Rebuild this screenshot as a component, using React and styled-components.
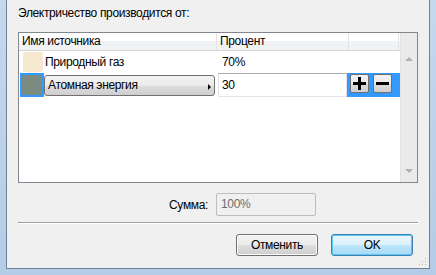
import React from "react";
import styled, { createGlobalStyle } from "styled-components";

const GlobalStyle = createGlobalStyle`
  body {
    margin: 0;
    font-family: "Liberation Sans", Arial, sans-serif;
    font-size: 12px;
    letter-spacing: -0.35px;
    color: #000;
  }
`;

const sources = [
  { name: "Природный газ", color: "#f6e7cf", percent: "70%" },
  { name: "Атомная энергия", color: "#7b8b7f", percent: "30", editing: true },
];

const App = () => {
  return (
    <Frame>
      <GlobalStyle />
      <Window>
        <Caption>Электричество производится от:</Caption>
        <TableBox>
          <TableMain>
            <HeaderRow>
              <HeaderCell $width={198}>Имя источника</HeaderCell>
              <HeaderCell $width={132}>Процент</HeaderCell>
              <HeaderCell $width={50} />
            </HeaderRow>
            {sources.map((s) =>
              s.editing ? (
                <EditRow key={s.name}>
                  <SelectedSwatchCell>
                    <Swatch $color={s.color} />
                  </SelectedSwatchCell>
                  <Dropdown>
                    {s.name}
                    <Arrow />
                  </Dropdown>
                  <PercentInput>{s.percent}</PercentInput>
                  <ActionsCell>
                    <SmallButton>
                      <svg width="13" height="13" viewBox="0 0 13 13">
                        <rect x="5" y="0" width="3" height="13" fill="#000" />
                        <rect x="0" y="5" width="13" height="3" fill="#000" />
                      </svg>
                    </SmallButton>
                    <SmallButton>
                      <svg width="13" height="13" viewBox="0 0 13 13">
                        <rect x="0" y="5" width="13" height="3" fill="#000" />
                      </svg>
                    </SmallButton>
                  </ActionsCell>
                </EditRow>
              ) : (
                <Row key={s.name}>
                  <SwatchCell>
                    <Swatch $color={s.color} />
                  </SwatchCell>
                  <NameCell>{s.name}</NameCell>
                  <PercentCell>{s.percent}</PercentCell>
                </Row>
              )
            )}
          </TableMain>
          <Scrollbar>
            <ScrollArrow $up />
            <ScrollArrow />
          </Scrollbar>
        </TableBox>
        <SumRow>
          <SumLabel>Сумма:</SumLabel>
          <SumInput>100%</SumInput>
        </SumRow>
        <Separator />
        <ButtonRow>
          <Button>Отменить</Button>
          <Button $default>OK</Button>
        </ButtonRow>
        <Grip>
          <svg width="8" height="8" viewBox="0 0 8 8">
            <rect x="6" y="0" width="1" height="1" fill="#b5b9bd" />
            <rect x="3" y="3" width="1" height="1" fill="#b5b9bd" />
            <rect x="6" y="3" width="1" height="1" fill="#b5b9bd" />
            <rect x="0" y="6" width="1" height="1" fill="#b5b9bd" />
            <rect x="3" y="6" width="1" height="1" fill="#b5b9bd" />
            <rect x="6" y="6" width="1" height="1" fill="#b5b9bd" />
          </svg>
        </Grip>
      </Window>
    </Frame>
  );
};

export default App;

const Frame = styled.div`
  width: 436px;
  height: 275px;
  box-sizing: border-box;
  padding: 0 6px 6px 6px;
  background: linear-gradient(to bottom, #c4d8ee, #b5cce6);
`;

const Window = styled.div`
  position: relative;
  height: 100%;
  box-sizing: border-box;
  background: #f0f0f0;
  border: 1px solid #6e8197;
  border-top: none;
  padding: 0 11px;
  display: flex;
  flex-direction: column;
`;

const Caption = styled.div`
  margin-top: 6px;
  height: 15px;
  line-height: 15px;
`;

const TableBox = styled.div`
  margin-top: 11px;
  height: 151px;
  box-sizing: border-box;
  border: 1px solid #828790;
  background: #fff;
  display: flex;
`;

const TableMain = styled.div`
  flex: 1;
  display: flex;
  flex-direction: column;
`;

const HeaderRow = styled.div`
  display: flex;
  height: 17px;
  border-bottom: 1px solid #d5d5d5;
  background: linear-gradient(to bottom, #ffffff 0%, #ffffff 45%, #f1f2f4 50%, #f1f2f4 100%);
`;

const HeaderCell = styled.div`
  width: ${(p) => p.$width}px;
  box-sizing: border-box;
  padding-left: 3px;
  line-height: 17px;
  border-right: 1px solid #e3e4e6;
`;

const Row = styled.div`
  display: flex;
  align-items: center;
  height: 22px;
`;

const EditRow = styled.div`
  display: flex;
  align-items: stretch;
  height: 24px;
`;

const SwatchCell = styled.div`
  width: 25px;
  display: flex;
  align-items: center;
  justify-content: flex-end;
  padding-right: 1px;
  box-sizing: border-box;
`;

const SelectedSwatchCell = styled.div`
  margin-left: 1px;
  width: 24px;
  box-sizing: border-box;
  background: #3399ff;
  display: flex;
  align-items: center;
  justify-content: center;
`;

const Swatch = styled.div`
  width: 20px;
  height: 20px;
  border-radius: 2px;
  background: ${(p) => p.$color};
`;

const NameCell = styled.div`
  width: 173px;
  padding-left: 1px;
`;

const PercentCell = styled.div`
  padding-left: 4px;
`;

const Dropdown = styled.div`
  position: relative;
  margin: 2px 0 1px 0;
  width: 171px;
  box-sizing: border-box;
  border: 1px solid #707070;
  border-radius: 3px;
  background: linear-gradient(to bottom, #f2f2f2 0%, #ebebeb 50%, #dddddd 51%, #cfcfcf 100%);
  padding-left: 3px;
  line-height: 19px;
`;

const Arrow = styled.span`
  position: absolute;
  right: 3px;
  top: 8px;
  width: 0;
  height: 0;
  border-top: 3px solid transparent;
  border-bottom: 3px solid transparent;
  border-left: 3px solid #000;
`;

const PercentInput = styled.div`
  margin-left: 3px;
  width: 129px;
  box-sizing: border-box;
  border: 1px solid #e2e3ea;
  border-top-color: #abadb3;
  background: #fff;
  padding-left: 3px;
  line-height: 22px;
`;

const ActionsCell = styled.div`
  width: 53px;
  background: #3399ff;
  display: flex;
  align-items: center;
  gap: 4px;
  padding: 0 0 3px 3px;
  box-sizing: border-box;
`;

const SmallButton = styled.div`
  width: 19px;
  height: 19px;
  box-sizing: border-box;
  border: 1px solid #707070;
  border-radius: 2px;
  background: linear-gradient(to bottom, #f2f2f2 0%, #ebebeb 50%, #dddddd 51%, #cfcfcf 100%);
  display: flex;
  align-items: center;
  justify-content: center;
`;

const Scrollbar = styled.div`
  width: 18px;
  background: #eaeaea;
  border-left: 1px solid #e2e2e2;
  display: flex;
  flex-direction: column;
  justify-content: space-between;
  align-items: center;
  padding: 24px 0 9px 0;
`;

const ScrollArrow = styled.span`
  width: 0;
  height: 0;
  border-left: 4px solid transparent;
  border-right: 4px solid transparent;
  ${(p) => (p.$up ? "border-bottom: 4px solid #b0b0b0;" : "border-top: 4px solid #b0b0b0;")}
`;

const SumRow = styled.div`
  margin-top: 10px;
  display: flex;
  align-items: center;
  gap: 8px;
`;

const SumLabel = styled.div`
  width: 190px;
  text-align: right;
`;

const SumInput = styled.div`
  width: 100px;
  height: 23px;
  box-sizing: border-box;
  border: 1px solid #b9bcc0;
  border-radius: 2px;
  background: #f0f0f0;
  color: #6d6d6d;
  padding-left: 4px;
  line-height: 21px;
`;

const Separator = styled.div`
  margin-top: 6px;
  height: 1px;
  background: #a0a0a0;
  border-bottom: 1px solid #fff;
`;

const ButtonRow = styled.div`
  margin-top: 10px;
  display: flex;
  justify-content: flex-end;
  gap: 13px;
  padding-right: 5px;
`;

const Button = styled.div`
  width: 82px;
  height: 22px;
  box-sizing: border-box;
  border: 1px solid ${(p) => (p.$default ? "#3c7fb1" : "#707070")};
  border-radius: 3px;
  background: ${(p) =>
    p.$default
      ? "linear-gradient(to bottom, #eaf6fd 0%, #d9f0fc 50%, #bee6fd 51%, #a7d9f5 100%)"
      : "linear-gradient(to bottom, #f2f2f2 0%, #ebebeb 50%, #dddddd 51%, #cfcfcf 100%)"};
  box-shadow: ${(p) => (p.$default ? "inset 0 0 0 1px #5ec8f2" : "inset 0 0 0 1px #fcfcfc")};
  text-align: center;
  line-height: 20px;
`;

const Grip = styled.div`
  position: absolute;
  right: 2px;
  bottom: 2px;
  width: 8px;
  height: 8px;
  display: flex;
`;
